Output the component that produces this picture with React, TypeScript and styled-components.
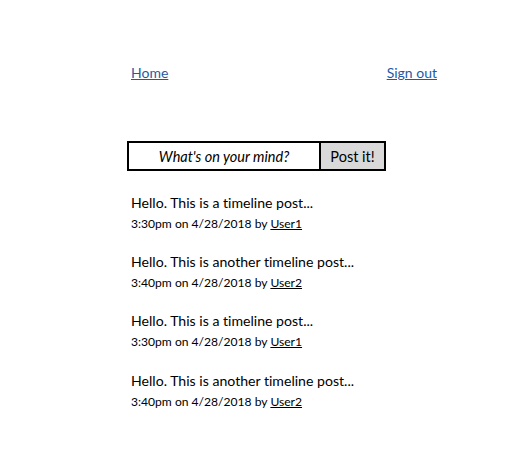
import React from "react";
import styled, { createGlobalStyle } from "styled-components";

const Global = createGlobalStyle`
  html, body { margin: 0; padding: 0; background: #fff; }
  body { font-family: "Lato", "Open Sans", sans-serif; color: #000; font-variant-ligatures: none; }
`;

const Page = styled.div`
  width: 519px;
  min-height: 474px;
  padding-top: 63px;
  box-sizing: border-box;
`;

const Header = styled.nav`
  margin-left: 131px;
  width: 306px;
  display: flex;
  justify-content: space-between;
  align-items: baseline;
`;

const NavLink = styled.a`
  font-size: 14px;
  line-height: 20px;
  color: #1f5aa6;
  text-decoration: underline;
`;

const Form = styled.form`
  margin: 58px 0 0 127px;
  width: 259px;
  height: 30px;
  display: flex;
  border: 2px solid #000;
  box-sizing: border-box;
`;

const Input = styled.input`
  flex: 0 0 190px;
  min-width: 0;
  border: none;
  padding: 0;
  margin: 0;
  font-family: inherit;
  font-size: 14.5px;
  font-style: italic;
  font-variant-ligatures: none;
  text-align: center;
  outline: none;
  background: #fff;
  &::placeholder { color: #000; opacity: 1; }
`;

const Button = styled.button`
  flex: 1;
  border: none;
  border-left: 2px solid #000;
  background: #d9d9d9;
  font-family: inherit;
  font-size: 14.5px;
  color: #000;
  padding: 0;
  margin: 0;
`;

const Posts = styled.ul`
  list-style: none;
  margin: 21px 0 0 131px;
  padding: 0;
  display: flex;
  flex-direction: column;
  gap: 18.2px;
`;

const Post = styled.li`
  display: flex;
  flex-direction: column;
`;

const Title = styled.div`
  font-size: 14.1px;
  line-height: 22px;
`;

const Meta = styled.div`
  font-size: 12.1px;
  line-height: 19px;
`;

const UserLink = styled.a`
  color: #000;
  text-decoration: underline;
`;

const posts = [
  { text: "Hello. This is a timeline post...", time: "3:30pm", user: "User1" },
  { text: "Hello. This is another timeline post...", time: "3:40pm", user: "User2" },
  { text: "Hello. This is a timeline post...", time: "3:30pm", user: "User1" },
  { text: "Hello. This is another timeline post...", time: "3:40pm", user: "User2" },
];

export default function App() {
  return (
    <Page>
      <Global />
      <Header>
        <NavLink href="#">Home</NavLink>
        <NavLink href="#">Sign out</NavLink>
      </Header>
      <Form onSubmit={(e) => e.preventDefault()}>
        <Input placeholder="What's on your mind?" />
        <Button type="submit">Post it!</Button>
      </Form>
      <Posts>
        {posts.map((p, i) => (
          <Post key={i}>
            <Title>{p.text}</Title>
            <Meta>
              {p.time} on 4/28/2018 by <UserLink href="#">{p.user}</UserLink>
            </Meta>
          </Post>
        ))}
      </Posts>
    </Page>
  );
}
